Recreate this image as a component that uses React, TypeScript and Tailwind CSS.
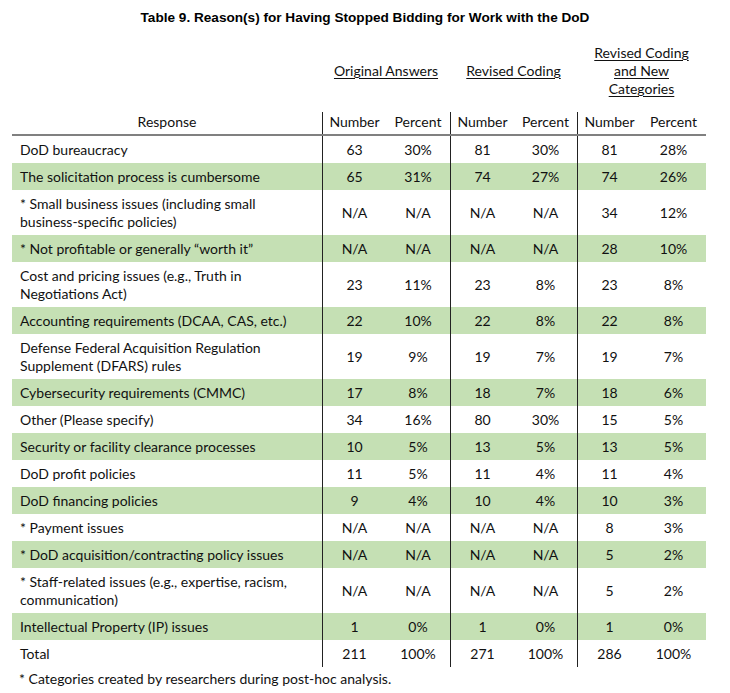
import React from "react";

type Row = {
  label: string[];
  values: string[];
  green?: boolean;
};

const rows: Row[] = [
  { label: ["DoD bureaucracy"], values: ["63", "30%", "81", "30%", "81", "28%"] },
  { label: ["The solicitation process is cumbersome"], values: ["65", "31%", "74", "27%", "74", "26%"], green: true },
  { label: ["* Small business issues (including small", "business-specific policies)"], values: ["N/A", "N/A", "N/A", "N/A", "34", "12%"] },
  { label: ["* Not profitable or generally \u201cworth it\u201d"], values: ["N/A", "N/A", "N/A", "N/A", "28", "10%"], green: true },
  { label: ["Cost and pricing issues (e.g., Truth in", "Negotiations Act)"], values: ["23", "11%", "23", "8%", "23", "8%"] },
  { label: ["Accounting requirements (DCAA, CAS, etc.)"], values: ["22", "10%", "22", "8%", "22", "8%"], green: true },
  { label: ["Defense Federal Acquisition Regulation", "Supplement (DFARS) rules"], values: ["19", "9%", "19", "7%", "19", "7%"] },
  { label: ["Cybersecurity requirements (CMMC)"], values: ["17", "8%", "18", "7%", "18", "6%"], green: true },
  { label: ["Other (Please specify)"], values: ["34", "16%", "80", "30%", "15", "5%"] },
  { label: ["Security or facility clearance processes"], values: ["10", "5%", "13", "5%", "13", "5%"], green: true },
  { label: ["DoD profit policies"], values: ["11", "5%", "11", "4%", "11", "4%"] },
  { label: ["DoD financing policies"], values: ["9", "4%", "10", "4%", "10", "3%"], green: true },
  { label: ["* Payment issues"], values: ["N/A", "N/A", "N/A", "N/A", "8", "3%"] },
  { label: ["* DoD acquisition/contracting policy issues"], values: ["N/A", "N/A", "N/A", "N/A", "5", "2%"], green: true },
  { label: ["* Staff-related issues (e.g., expertise, racism,", "communication)"], values: ["N/A", "N/A", "N/A", "N/A", "5", "2%"] },
  { label: ["Intellectual Property (IP) issues"], values: ["1", "0%", "1", "0%", "1", "0%"], green: true },
  { label: ["Total"], values: ["211", "100%", "271", "100%", "286", "100%"] },
];

const cols = "grid grid-cols-[310px_64px_64px_64px_63px_64px_65px]";

function Cell({ i, children }: { i: number; children: React.ReactNode }) {
  const line = i === 0 || i === 2 || i === 4 ? "border-l border-[#222]" : "";
  return <div className={`flex items-center justify-center ${line}`}>{children}</div>;
}

export default function App() {
  return (
    <div className="w-[730px] h-[693px] bg-white text-[#111] pt-[10px] font-['Lato',sans-serif] text-[14px] leading-[18px]">
      <h1 className="text-center font-['Liberation_Sans',Arial,sans-serif] font-bold text-[13.6px] leading-[16px] text-black">
        Table 9. Reason(s) for Having Stopped Bidding for Work with the DoD
      </h1>

      <div className="ml-[12px] w-[694px] mt-[18px]">
        <div className={`${cols} h-[54px]`}>
          <div />
          <div className="col-span-2 flex items-center justify-center">
            <span className="underline underline-offset-2">Original Answers</span>
          </div>
          <div className="col-span-2 flex items-center justify-center">
            <span className="underline underline-offset-2">Revised Coding</span>
          </div>
          <div className="col-span-2 flex flex-col items-center justify-center">
            <span className="underline underline-offset-2">Revised Coding</span>
            <span className="underline underline-offset-2">and New</span>
            <span className="underline underline-offset-2">Categories</span>
          </div>
        </div>

        <div className={`${cols} h-[24px] mt-[14px] border-b-2 border-[#808080]`}>
          <div className="text-center pt-[1px]">Response</div>
          {["Number", "Percent", "Number", "Percent", "Number", "Percent"].map((h, i) => (
            <div
              key={i}
              className={`text-center pt-[1px] ${i % 2 === 0 ? "border-l border-[#222]" : ""}`}
            >
              {h}
            </div>
          ))}
        </div>

        {rows.map((r, idx) => (
          <div
            key={idx}
            className={`${cols} ${r.label.length > 1 ? "h-[45px]" : "h-[27px]"} ${r.green ? "bg-[#c5e0b4]" : ""}`}
          >
            <div className="flex flex-col justify-center pl-[8px]">
              {r.label.map((l, j) => (
                <span key={j}>{l}</span>
              ))}
            </div>
            {r.values.map((v, i) => (
              <Cell key={i} i={i}>
                {v}
              </Cell>
            ))}
          </div>
        ))}
      </div>

      <p className="pl-[19px] mt-[3px]">* Categories created by researchers during post-hoc analysis.</p>
    </div>
  );
}
